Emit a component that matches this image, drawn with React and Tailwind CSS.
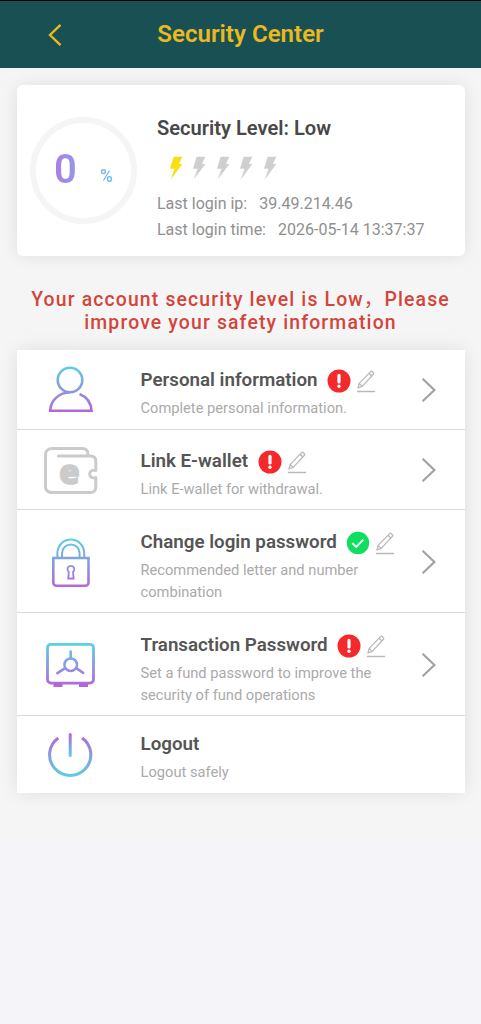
import React from "react";

const levels = [true, false, false, false, false];

const items = [
  {
    title: "Personal information",
    text: "Complete personal information.",
    icon: UserIcon,
    status: "warn",
    height: "h-20",
    pad: "pt-[17px]",
  },
  {
    title: "Link E-wallet",
    text: "Link E-wallet for withdrawal.",
    icon: WalletIcon,
    status: "warn",
    height: "h-20",
    pad: "pt-[18px]",
  },
  {
    title: "Change login password",
    text: "Recommended letter and number combination",
    icon: LockIcon,
    status: "ok",
    height: "h-[103px]",
    pad: "pt-[19px]",
    shift: "pt-[2px]",
  },
  {
    title: "Transaction Password",
    text: "Set a fund password to improve the security of fund operations",
    icon: SafeIcon,
    status: "warn",
    height: "h-[103px]",
    pad: "pt-[19px]",
    shift: "pt-[2px]",
  },
  {
    title: "Logout",
    text: "Logout safely",
    icon: PowerIcon,
    height: "h-[77px]",
    pad: "pt-[15px]",
  },
];

function Gradient({ id, from = "#5bcfe6", to = "#b565dc", y1, y2 }) {
  return (
    <defs>
      <linearGradient id={id} gradientUnits="userSpaceOnUse" x1="0" x2="0" y1={y1} y2={y2}>
        <stop offset="0" stopColor={from} />
        <stop offset="1" stopColor={to} />
      </linearGradient>
    </defs>
  );
}

function UserIcon() {
  return (
    <svg width="60" height="60" viewBox="0 0 60 60" fill="none" stroke="url(#g-user)" strokeWidth="2.6">
      <Gradient id="g-user" y1="6" y2="52" />
      <circle cx="30" cy="20" r="12.3" />
      <path d="M30 32.3C18 33 10.5 41 10.2 50.7h41.4C51 43 47 37 39.5 34" />
    </svg>
  );
}

function WalletIcon() {
  return (
    <svg width="60" height="60" viewBox="0 0 60 60" fill="none" stroke="#cbcbcb" strokeWidth="3">
      <path
        d="M55.8 37.5v9.3c0 3.4-2 5.7-5.2 5.7H11.3c-3.4 0-5.8-2.3-5.8-5.8V15c0-3.8 2.7-6.5 6.5-6.5h30.5c3.2 0 5.3 2 5.3 5v2.5M18.5 16h31.9c3.4 0 5.4 2 5.4 5v9.5"
        strokeLinecap="round"
      />
      <path d="M56.2 30.4h-3.6a3.8 3.8 0 0 0 0 7.4h3.6" strokeWidth="2.8" />
      <text
        x="19.2"
        y="43.8"
        fill="#cbcbcb"
        stroke="#cbcbcb"
        strokeWidth="1.6"
        className="font-[Open_Sans,sans-serif] text-[33px] font-extrabold"
      >
        e
      </text>
    </svg>
  );
}

function LockIcon() {
  return (
    <svg width="60" height="60" viewBox="0 0 60 60" fill="none" stroke="url(#g-lock)" strokeWidth="2.6">
      <Gradient id="g-lock" y1="6" y2="56" />
      <path d="M17.4 25.5v-4.5a13.4 13.4 0 0 1 26.8 0v4.5M22 25.5v-4.3a8.8 8.8 0 0 1 17.6 0v4.3" strokeWidth="2" />
      <path d="M13.3 26h35.2v24.6a3.2 3.2 0 0 1-3.2 3.2H16.5a3.2 3.2 0 0 1-3.2-3.2z" />
      <path d="M28.8 39.9a3.4 3.4 0 1 1 4.2 0l.6 6.6h-5.4z" strokeWidth="1.8" />
    </svg>
  );
}

function SafeIcon() {
  return (
    <svg width="60" height="60" viewBox="0 0 60 60" fill="none" stroke="url(#g-safe)" strokeWidth="2.8">
      <Gradient id="g-safe" y1="9" y2="51" />
      <rect x="7.5" y="9.3" width="46" height="38.8" rx="3.5" />
      <circle cx="30.7" cy="29.7" r="6.3" strokeWidth="2.5" />
      <path d="M30.7 16.5v7M25.2 33.2l-7.8 5M36.2 33.2l7 4.6" strokeWidth="2.6" strokeLinecap="round" />
      <path d="M13.5 49h9v3h-9zM39 49h9v3h-9z" fill="#b565dc" stroke="none" />
    </svg>
  );
}

function PowerIcon() {
  return (
    <svg width="60" height="60" viewBox="0 0 60 60" fill="none" stroke="url(#g-power)" strokeWidth="3">
      <Gradient id="g-power" from="#b565dc" to="#5bcfe6" y1="8" y2="52" />
      <path d="M18.3 13a20.6 20.6 0 1 0 23.8 0" />
      <Gradient id="g-power-bar" from="#b565dc" to="#5bcfe6" y1="9" y2="31" />
      <path d="M30.2 9.5v21" stroke="url(#g-power-bar)" strokeLinecap="round" />
    </svg>
  );
}

function StatusIcon({ status }) {
  if (status === "ok") {
    return (
      <svg width="24" height="24" viewBox="0 0 24 24" fill="none">
        <circle cx="12" cy="12" r="11.2" fill="#0fdf5f" />
        <path d="M6.3 12.2l4 3.7 7-7.3" stroke="#fff" strokeWidth="1.9" />
      </svg>
    );
  }
  return (
    <svg width="24" height="24" viewBox="0 0 24 24" fill="none">
      <circle cx="12" cy="12" r="11.5" fill="#f5282b" />
      <path d="M12 6.4v6.6" stroke="#fff" strokeWidth="3.2" strokeLinecap="round" />
      <circle cx="12" cy="17.2" r="1.7" fill="#fff" />
    </svg>
  );
}

function PencilIcon() {
  return (
    <svg width="20" height="24" viewBox="0 0 20 24" fill="none" stroke="#b9b9b9" strokeWidth="1.3" strokeLinejoin="round">
      <path d="M2 19l1.2-4.6L14.6 2.6a1 1 0 0 1 1.5 0l1.3 1.2a1 1 0 0 1 0 1.5L6.2 17.4zM13 4.3l2.9 2.7M3.2 14.4l3 3" />
      <path d="M1 22.5h18" strokeWidth="1.5" />
    </svg>
  );
}

function Bolt({ active }) {
  return (
    <svg width="14" height="24" viewBox="0 0 14 24" className={active ? "fill-[#fbdf12]" : "fill-[#cfcfcf]"}>
      <path d="M4.6.8h8.7L10 8h3.4L1.8 23.4 5.5 12.8H1z" />
    </svg>
  );
}

function Row({ item }) {
  const Icon = item.icon;
  return (
    <li
      className={`flex ${item.height} border-b-[1.5px] border-[#d9d9d9] bg-white last:border-b-0`}
    >
      <div className={`flex w-[107px] shrink-0 items-center justify-center ${item.shift || ""}`}>
        <Icon />
      </div>
      <div className={`w-[260px] shrink-0 pl-[17px] ${item.pad}`}>
        <div className="flex h-[27px] items-center">
          <h2 className="text-[18.75px] font-semibold whitespace-nowrap text-[#555]">{item.title}</h2>
          {item.status && (
            <div className="ml-[9.5px] flex items-center gap-[5px] pt-px">
              <StatusIcon status={item.status} />
              <PencilIcon />
            </div>
          )}
        </div>
        <p className="mt-[3px] w-[243px] text-[14.68px] leading-[22px] text-[#aaa]">{item.text}</p>
      </div>
      {item.status && (
        <div className={`ml-[37px] flex items-center ${item.shift || ""}`}>
          <svg width="16" height="26" viewBox="0 0 16 26" fill="none" stroke="#a3a3a3" strokeWidth="2.2">
            <path d="M1.6 1.8L13.4 13 1.6 24.2" />
          </svg>
        </div>
      )}
    </li>
  );
}

function App() {
  return (
    <div className="flex h-[1024px] w-[481px] flex-col bg-[#f4f4f9] font-[Roboto,Noto_Sans_CJK_SC,sans-serif]">
      <div className="h-[840px] bg-[#f5f5f5]">
        <header className="grid h-[68px] grid-cols-[1fr_auto_1fr] items-center border-t-[1.5px] border-black bg-[#195053]">
          <svg width="14" height="24" viewBox="0 0 14 24" fill="none" stroke="#eab920" strokeWidth="2.4" className="ml-12">
            <path d="M12.5 1.8L2 12l10.5 10.2" />
          </svg>
          <h1 className="text-[24.1px] font-semibold text-[#eab920]">Security Center</h1>
        </header>

        <section className="mx-auto mt-[17px] flex h-[171px] w-[448px] rounded-md bg-white shadow-[0_0_18px_rgba(0,0,0,0.09)]">
          <div className="mt-[31.5px] ml-[13.5px] flex size-[107px] shrink-0 items-center justify-center rounded-full border-[6px] border-[#f5f5f5]">
            <div className="flex items-center bg-linear-to-r from-[#aa7ce8] to-[#62bfea] bg-clip-text text-transparent">
              <span className="w-[46px] text-[40px] leading-[48px] font-semibold">0</span>
              <span className="mt-[13px] text-[17.5px] font-semibold">%</span>
            </div>
          </div>
          <div className="ml-5 pt-7">
            <h2 className="text-[20.1px] leading-[30px] font-semibold text-[#484848]">Security Level: Low</h2>
            <div className="mt-[13px] ml-[11.5px] flex gap-[9.5px]">
              {levels.map((active, i) => (
                <Bolt key={i} active={active} />
              ))}
            </div>
            <div className="mt-[11px] text-[16px] leading-[25.5px] text-[#8f8f8f]">
              <p>
                Last login ip:<span className="ml-3">39.49.214.46</span>
              </p>
              <p>
                Last login time:<span className="ml-3">2026-05-14 13:37:37</span>
              </p>
            </div>
          </div>
        </section>

        <p lang="zh-CN" className="mt-8 text-center text-[19.4px] leading-[23px] font-medium tracking-[1.15px] text-[#d2453b]">
          Your account security level is Low<span className="font-normal">，</span>Please
          <br />
          improve your safety information
        </p>

        <ul className="mx-auto mt-4 w-[448px] shadow-[0_0_18px_rgba(0,0,0,0.09)]">
          {items.map((item) => (
            <Row key={item.title} item={item} />
          ))}
        </ul>
      </div>
    </div>
  );
}

export default App;
